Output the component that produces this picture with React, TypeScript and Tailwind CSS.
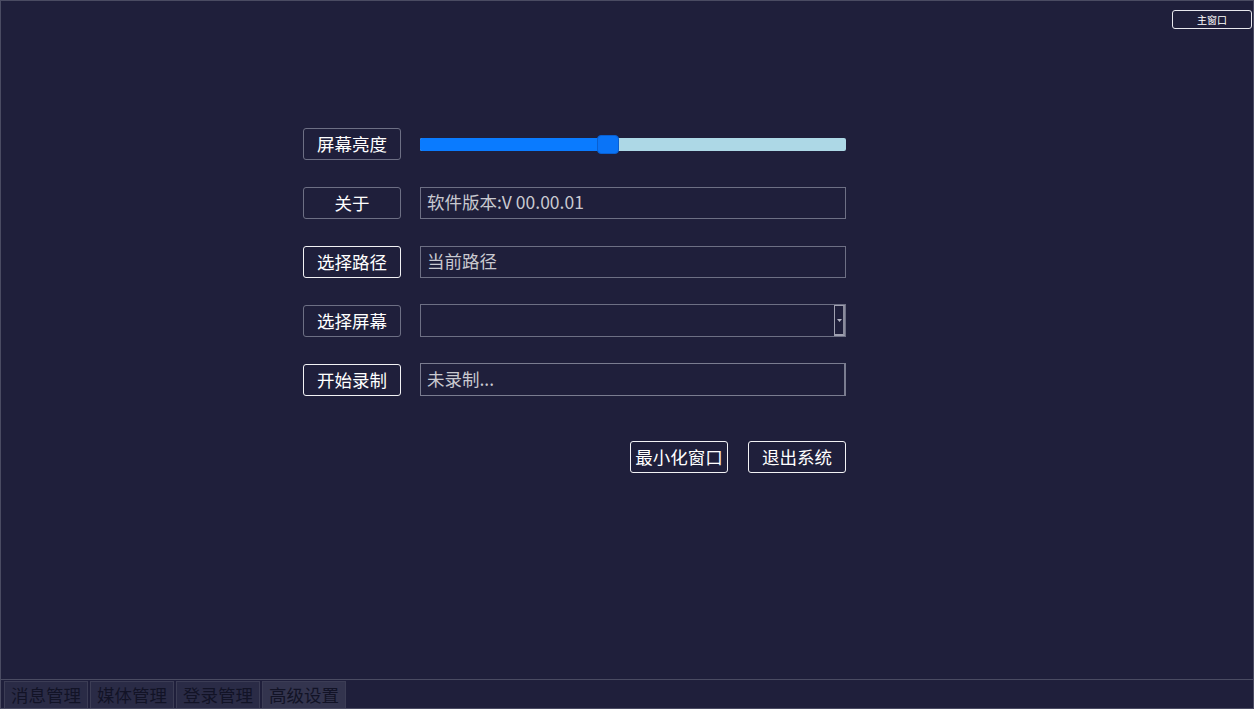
import React from "react";

const Btn = ({ label, bright }: { label: string; bright?: boolean }) => (
  <button
    className={`w-[98px] h-[32px] shrink-0 rounded-[3px] border text-[17.5px] leading-none text-white ${
      bright ? "border-[#f2f2f5]" : "border-[#6d6f84]"
    }`}
  >
    {label}
  </button>
);

const Field = ({ text }: { text: string }) => (
  <div className="flex-1 h-[32px] border border-[#6d6f84] flex items-center pl-[6px] text-[17.5px] text-[#c9c9d0]">
    {text}
  </div>
);

const tabs = ["消息管理", "媒体管理", "登录管理", "高级设置"];

const App = () => {
  return (
    <div className="h-[709px] w-[1254px] bg-[#1f1f3b] border border-[#4a4b62] flex flex-col overflow-hidden font-['Noto_Sans_CJK_SC','Noto_Sans',sans-serif]">
      <div className="flex-1 flex flex-col">
        <div className="flex justify-end pt-[9px] pr-[1px]">
          <button className="w-[80px] h-[19px] rounded-[3px] border border-[#e8e8ee] text-[10px] leading-none text-white">
            主窗口
          </button>
        </div>

        <div className="mt-[99px] ml-[302px] w-[543px] flex flex-col gap-[26px]">
          <div className="flex items-center gap-[19px] h-[32px]">
            <Btn label="屏幕亮度" />
            <div className="flex-1 relative h-[13px] rounded-[2px] bg-[#add8e6]">
              <div className="absolute left-0 top-0 h-full w-[44%] rounded-l-[2px] bg-[#0a7bff]" />
              <div className="absolute left-[177px] top-[-3px] w-[22px] h-[19px] rounded-[4px] bg-[#0a74f7] border border-[#0a5fd0]" />
            </div>
          </div>

          <div className="flex items-center gap-[19px] h-[33px]">
            <Btn label="关于" />
            <Field text="软件版本:V 00.00.01" />
          </div>

          <div className="flex items-center gap-[19px] h-[33px]">
            <Btn label="选择路径" bright />
            <Field text="当前路径" />
          </div>

          <div className="flex items-center gap-[19px] h-[33px]">
            <Btn label="选择屏幕" />
            <div className="flex-1 h-[33px] border border-[#6d6f84] flex justify-end">
              <div className="w-[11px] h-full border-l border-r-2 border-b-2 border-t border-[#9fa0b0] border-r-[#8a8b9c] flex items-center justify-center">
                <svg width="5" height="3" viewBox="0 0 5 3">
                  <path d="M0 0 H5 L2.5 3 Z" fill="#b5b6c4" />
                </svg>
              </div>
            </div>
          </div>

          <div className="flex items-center gap-[19px] h-[33px]">
            <Btn label="开始录制" bright />
            <div className="flex-1 h-[33px] border border-[#7a7c90] border-r-2 flex items-center pl-[6px] text-[17.5px] text-[#c9c9d0]">
              未录制...
            </div>
          </div>

          <div className="flex justify-end gap-[20px] mt-[19px]">
            <button className="w-[98px] h-[32px] rounded-[3px] border border-[#f2f2f5] text-[17.5px] leading-none text-white">
              最小化窗口
            </button>
            <button className="w-[98px] h-[32px] rounded-[3px] border border-[#f2f2f5] text-[17.5px] leading-none text-white">
              退出系统
            </button>
          </div>
        </div>
      </div>

      <div className="h-[29px] border-t border-[#4a4b62] flex items-end gap-[2px] pl-[3px]">
        {tabs.map((t, i) => (
          <div
            key={t}
            className={`h-[27px] w-[84px] flex items-center justify-center text-[17.5px] text-[#121326] border-x border-t border-[#3c3d55] ${
              i === 3 ? "bg-[#33344e]" : "bg-[#2a2b46]"
            }`}
          >
            {t}
          </div>
        ))}
      </div>
    </div>
  );
};

export default App;
